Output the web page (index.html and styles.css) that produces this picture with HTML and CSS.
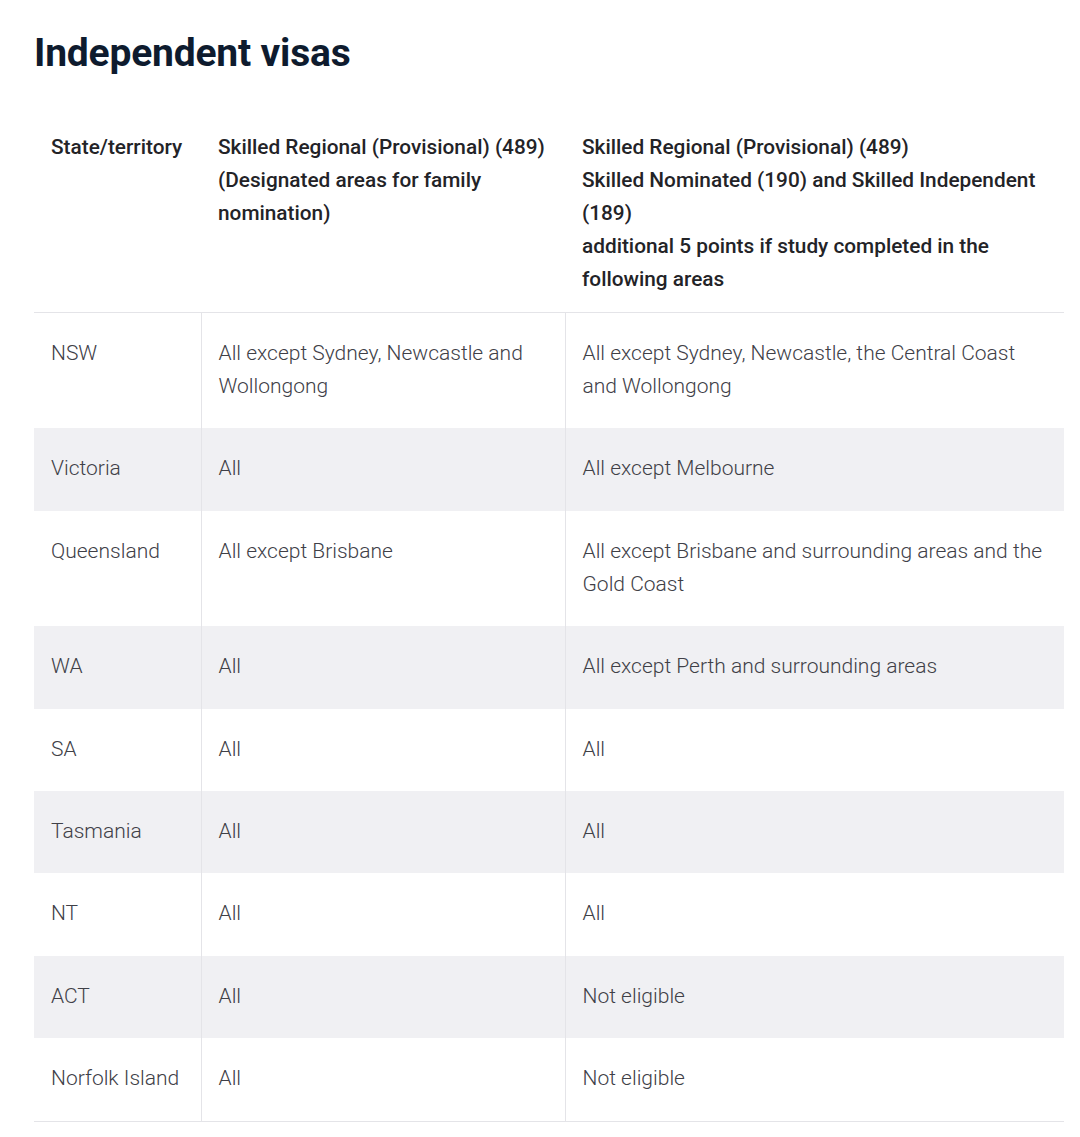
FILE: index.html
```html
<!DOCTYPE html>
<html>
<head>
<meta charset="utf-8">
<link rel="stylesheet" href="styles.css">
</head>
<body>
<main class="page">
  <h1 class="title">Independent visas</h1>
  <table class="visa-table">
    <colgroup>
      <col class="c1"><col class="c2"><col class="c3">
    </colgroup>
    <thead>
      <tr>
        <th>State/territory</th>
        <th>Skilled Regional (Provisional) (489)<br>(Designated areas for family nomination)</th>
        <th>Skilled Regional (Provisional) (489)<br>Skilled Nominated (190) and Skilled Independent (189)<br>additional 5 points if study completed in the following areas</th>
      </tr>
    </thead>
    <tbody>
      <tr><td>NSW</td><td>All except Sydney, Newcastle and Wollongong</td><td>All except Sydney, Newcastle, the Central Coast and Wollongong</td></tr>
      <tr><td>Victoria</td><td>All</td><td>All except Melbourne</td></tr>
      <tr><td>Queensland</td><td>All except Brisbane</td><td>All except Brisbane and surrounding areas and the Gold Coast</td></tr>
      <tr><td>WA</td><td>All</td><td>All except Perth and surrounding areas</td></tr>
      <tr><td>SA</td><td>All</td><td>All</td></tr>
      <tr><td>Tasmania</td><td>All</td><td>All</td></tr>
      <tr><td>NT</td><td>All</td><td>All</td></tr>
      <tr><td>ACT</td><td>All</td><td>Not eligible</td></tr>
      <tr><td>Norfolk Island</td><td>All</td><td>Not eligible</td></tr>
    </tbody>
  </table>
</main>
</body>
</html>
```
FILE: styles.css
```css
html, body {
  margin: 0;
  padding: 0;
  background: #ffffff;
}
.page {
  padding: 30px 16px 0 34px;
  font-family: Roboto, "Liberation Sans", Arial, sans-serif;
}
.title {
  margin: 0 0 39px 0;
  font-size: 39px;
  line-height: 46px;
  font-weight: 700;
  color: #0e1b2e;
  letter-spacing: -0.2px;
}
.visa-table {
  width: 1030px;
  border-collapse: collapse;
  table-layout: fixed;
  font-size: 21px;
  line-height: 33px;
}
.c1 { width: 167px; }
.c2 { width: 364px; }
.c3 { width: 499px; }
.visa-table th {
  text-align: left;
  vertical-align: top;
  font-weight: 500;
  font-size: 20.8px;
  color: #232327;
  padding: 16px 8px 16px 17px;
  border-bottom: 1px solid #e4e4e8;
}
.visa-table th:last-child {
  padding-right: 17px;
}
.visa-table td {
  vertical-align: top;
  color: #404047;
  font-weight: 300;
  padding: 24px 17px 25.4px 17px;
  border-left: 1px solid #e4e4e8;
}
.visa-table td:first-child {
  border-left: none;
}
.visa-table tbody tr:nth-child(even) {
  background: #f0f0f3;
}
.visa-table tbody tr:last-child td {
  border-bottom: 1px solid #e4e4e8;
}
```
